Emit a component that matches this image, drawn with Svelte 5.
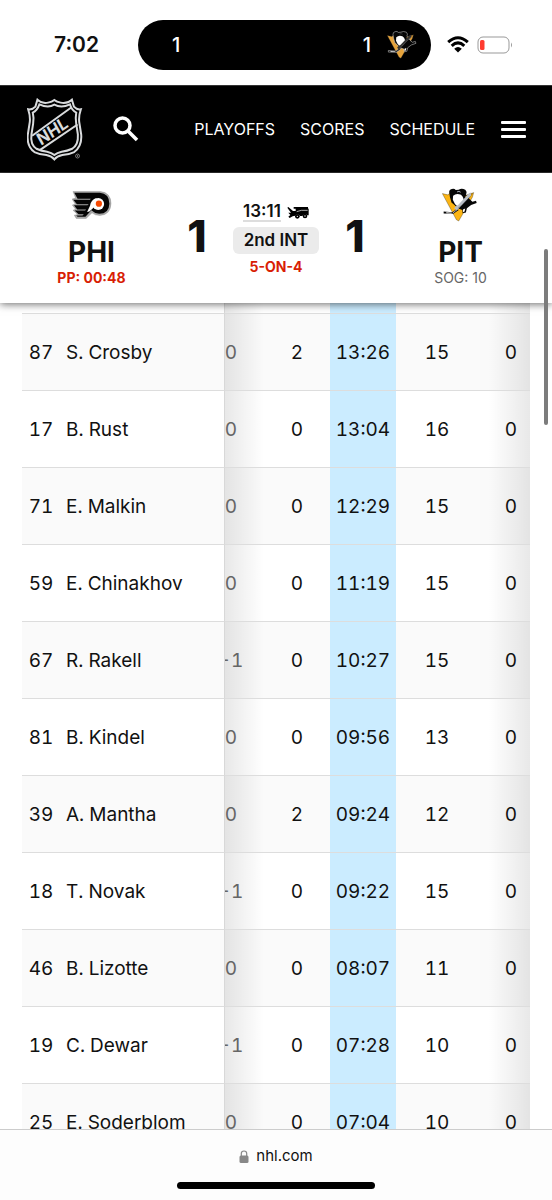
<script lang="ts">
    type Skater = {
        number: number;
        name: string;
        plusMinus: string;
        pim: number;
        toi: string;
        shifts: number;
        giveaways: number;
    };

    const links = ["PLAYOFFS", "SCORES", "SCHEDULE"];

    const skaters: Skater[] = [
        { number: 87, name: "S. Crosby", plusMinus: "0", pim: 2, toi: "13:26", shifts: 15, giveaways: 0 },
        { number: 17, name: "B. Rust", plusMinus: "0", pim: 0, toi: "13:04", shifts: 16, giveaways: 0 },
        { number: 71, name: "E. Malkin", plusMinus: "0", pim: 0, toi: "12:29", shifts: 15, giveaways: 0 },
        { number: 59, name: "E. Chinakhov", plusMinus: "0", pim: 0, toi: "11:19", shifts: 15, giveaways: 0 },
        { number: 67, name: "R. Rakell", plusMinus: "-1", pim: 0, toi: "10:27", shifts: 15, giveaways: 0 },
        { number: 81, name: "B. Kindel", plusMinus: "0", pim: 0, toi: "09:56", shifts: 13, giveaways: 0 },
        { number: 39, name: "A. Mantha", plusMinus: "0", pim: 2, toi: "09:24", shifts: 12, giveaways: 0 },
        { number: 18, name: "T. Novak", plusMinus: "-1", pim: 0, toi: "09:22", shifts: 15, giveaways: 0 },
        { number: 46, name: "B. Lizotte", plusMinus: "0", pim: 0, toi: "08:07", shifts: 11, giveaways: 0 },
        { number: 19, name: "C. Dewar", plusMinus: "-1", pim: 0, toi: "07:28", shifts: 10, giveaways: 0 },
        { number: 25, name: "E. Soderblom", plusMinus: "0", pim: 0, toi: "07:04", shifts: 10, giveaways: 0 },
    ];
</script>

{#snippet penguins(size: string)}
    <svg class="penguins {size}" viewBox="50 24 110 104" aria-hidden="true">
        <path class="gold" d="M51 41 L68 45 L76 38 L92 36 L124 46 L147 38 L143 52 L101 125 L94 121 Z" />
        <path class="ink" d="M72 38 Q71 29 80 27 Q87 24 92 30 L101 29 Q110 24 121 29 Q128 36 123 43 L134 58 L143 66 L154 63 L156 70 L139 76 L126 86 L123 99 L113 101 L112 91 L98 86 L88 76 L79 68 L74 51 Z" />
        <path class="white" d="M84 48 Q94 38 108 45 Q118 54 116 67 Q108 80 99 82 Q87 73 83 60 Z" />
        <path class="gold" d="M120 49 L143 41 L134 54 L126 54 Z" />
        <path class="gray" d="M132 41 L138 38 L139 47 L98 87 L91 81 L100 75 Z" />
        <path class="ink" d="M55 96 L82 98 L96 87 L101 91 L85 103 L55 102 Z" />
        <path class="white" d="M63 98 L80 100 L79 102 L63 101 Z M114 90 L121 87 L119 96 L114 98 Z" />
        <path class="gray" d="M92 80 L101 87 L95 93 L87 86 Z" />
        <path class="stroke" d="M137 47 L98 88 L83 101 M96 36 Q102 32 107 37" />
    </svg>
{/snippet}

<div class="screen">
    <div class="status-bar">
        <span class="clock">7:02</span>
        <div class="island">
            <span>1</span>
            <span class="island-score">1</span>
            {@render penguins("small")}
        </div>
        <div class="status-icons">
            <svg class="wifi" viewBox="0 0 22 17" aria-hidden="true">
                <path d="M1.2 6.2 Q11 -2.8 20.8 6.2" />
                <path d="M4.7 9.8 Q11 4 17.3 9.8" />
                <path class="dot" d="M7.2 12.7 Q11 9.3 14.8 12.7 L11 16.5 Z" />
            </svg>
            <svg class="battery" viewBox="0 0 36 18" aria-hidden="true">
                <rect class="shell" x="1" y="1" width="31" height="16" rx="5" />
                <rect class="charge" x="3" y="4" width="4.5" height="10" rx="1.5" />
                <path d="M34 6.5 Q36 9 34 11.5 Z" />
            </svg>
        </div>
    </div>

    <header class="site-nav">
        <a class="home" href="/" aria-label="Home">
            <svg viewBox="82 36 168 190">
                <path class="shield" d="M113 41 Q126 54 145 50 Q157 48 164 42 Q171 48 183 50 Q203 54 217 41 L223 62 Q232 72 244 70 Q237 91 239 108 L245 146 Q248 181 224 199 Q207 207 188 208 Q172 211 164 221 Q156 211 140 208 Q121 207 104 199 Q80 181 84 146 L90 108 Q92 91 85 70 Q98 72 107 62 Z" />
                <path class="shield" d="M119 55 Q145 67 164 56 Q185 67 211 55 Q217 74 230 80 Q227 97 230 114 L235 146 Q237 177 218 189 Q203 196 186 198 Q172 201 164 208 Q156 201 142 198 Q125 196 110 189 Q91 177 95 146 L100 114 Q103 97 99 80 Q112 74 119 55 Z" />
                <path class="band" d="M97 150 L216 64 M120 193 L234 116" />
                <text transform="translate(124 181) rotate(-35) skewX(-6)">NHL</text>
                <circle class="mark" cx="234" cy="211" r="6" />
                <circle class="mark-dot" cx="234" cy="211" r="2" />
            </svg>
        </a>
        <button type="button" class="search" aria-label="Search">
            <svg viewBox="0 0 26 26">
                <circle cx="9.5" cy="9.5" r="7.5" />
                <path d="M15 15 L24 24" />
            </svg>
        </button>
        <nav>
            {#each links as link}
                <a href="/{link.toLowerCase()}">{link}</a>
            {/each}
        </nav>
        <button type="button" class="menu" aria-label="Menu">
            <span></span>
            <span></span>
            <span></span>
        </button>
    </header>

    <section class="scoreboard">
        <div class="team">
            <svg class="flyers" viewBox="215 61 122 90" aria-hidden="true">
                <path class="edge" d="M218 65 H302 Q333 68 334 101 Q333 136 300 138 Q285 138 276 130 L258 147 H228 L222 137 L232 135 L218 122 L226 119 L216 106 L225 103 L215 88 L226 85 Z" />
                <path class="ink" d="M222 69 H300 Q328 71 329 102 Q328 132 298 133 Q284 132 274 122 L256 142 H232 L228 138 H247 L251 134 H235 L223 123 H255 L258 120 H231 L221 107 H262 L266 104 H230 L219 90 H270 L272 87 H232 Z" />
                <circle class="white" cx="295" cy="103" r="18" />
                <path class="white" d="M290 85 Q273 90 270 108 L261 127 L268 126 L283 112 Z" />
                <circle class="orange" cx="297" cy="102" r="9.5" />
            </svg>
            <span class="abbrev">PHI</span>
            <span class="detail alert">PP: 00:48</span>
        </div>
        <span class="score">1</span>
        <div class="period">
            <div class="time-row">
                <span class="time">13:11</span>
                <svg class="zamboni" viewBox="0 0 66 39" aria-hidden="true">
                    <path d="M20 3 H63 V7 L65 9 V28 H61 Q54 19 46 30 H39 Q32 20 25 29 L17 31 L8 36 L4 32 L10 27 L4 20 H12 L1 5 L4 3 L18 15 H26 V8 H20 Z" />
                    <circle cx="31" cy="31" r="7" />
                    <circle cx="54" cy="30" r="7" />
                    <path class="cut" d="M29 17 L43 13 H62" />
                    <circle class="hub" cx="31" cy="31" r="2" />
                    <circle class="hub" cx="54" cy="30" r="2" />
                </svg>
            </div>
            <span class="pill">2nd INT</span>
            <span class="detail alert">5-ON-4</span>
        </div>
        <span class="score">1</span>
        <div class="team">
            {@render penguins("large")}
            <span class="abbrev">PIT</span>
            <span class="detail">SOG: 10</span>
        </div>
    </section>

    <main>
        <table>
            <colgroup>
                <col class="number-col" />
                <col />
                <col class="edge-col" />
                <col class="stat-col" />
                <col class="stat-col" />
                <col class="shift-col" />
                <col class="last-col" />
            </colgroup>
            <tbody>
                <tr class="scrolled">
                    <td></td>
                    <td></td>
                    <td class="plus-minus"></td>
                    <td></td>
                    <td class="sorted"></td>
                    <td></td>
                    <td class="last"></td>
                </tr>
                {#each skaters as skater}
                    <tr>
                        <td class="number">{skater.number}</td>
                        <td class="name">{skater.name}</td>
                        <td class="plus-minus">
                            <div><span>{skater.plusMinus}</span></div>
                        </td>
                        <td>{skater.pim}</td>
                        <td class="sorted">{skater.toi}</td>
                        <td>{skater.shifts}</td>
                        <td class="last">{skater.giveaways}</td>
                    </tr>
                {/each}
            </tbody>
        </table>
    </main>

    <footer>
        <a class="address" href="https://nhl.com">
            <svg viewBox="0 0 10 13" aria-hidden="true">
                <rect x="0.5" y="5.5" width="9" height="7.5" rx="1.5" />
                <path d="M2.3 6 V3.6 Q2.3 1 5 1 Q7.7 1 7.7 3.6 V6" />
            </svg>
            nhl.com
        </a>
        <div class="home-indicator"></div>
    </footer>
    <div class="scroll-thumb"></div>
</div>

<style>
    :global(body) {
        margin: 0;
        background: #fff;
    }

    .screen {
        position: relative;
        height: 100vh;
        overflow: hidden;
        display: flex;
        flex-direction: column;
        font-family: Inter, "Liberation Sans", sans-serif;
        color: #111;
    }

    a {
        color: inherit;
        text-decoration: none;
    }

    button {
        padding: 0;
        border: none;
        background: none;
        cursor: pointer;
    }

    svg {
        display: block;
    }

    .status-bar {
        flex: none;
        height: 85px;
        padding-top: 4px;
        box-sizing: border-box;
        display: grid;
        grid-template-columns: 138px 1fr 121px;
        align-items: center;
    }

    .clock {
        padding-left: 54px;
        font-size: 21px;
        font-weight: 600;
    }

    .island {
        height: 50px;
        padding: 0 14px 0 34px;
        border-radius: 25px;
        background: #000;
        color: #fff;
        display: flex;
        align-items: center;
        font-size: 20px;
        font-weight: 500;
    }

    .island-score {
        margin-left: auto;
        margin-right: 16px;
    }

    .status-icons {
        padding-left: 16px;
        display: flex;
        align-items: center;
        gap: 8px;
    }

    .wifi {
        width: 22px;
        height: 17px;
        fill: none;
        stroke: #000;
        stroke-width: 3;
    }

    .wifi .dot {
        fill: #000;
        stroke: none;
    }

    .battery {
        width: 36px;
        height: 18px;
        fill: #999;
    }

    .battery .shell {
        fill: none;
        stroke: #999;
    }

    .battery .charge {
        fill: #ff3b30;
    }

    .penguins.small {
        width: 30px;
        height: 30px;
        overflow: visible;
    }

    .penguins.large {
        width: 36px;
        height: 34px;
    }

    .gold {
        fill: #fcb514;
        stroke: #222;
        stroke-width: 1;
    }

    .ink {
        fill: #060606;
    }

    .white {
        fill: #fff;
    }

    .gray {
        fill: #b8bec6;
    }

    .penguins .stroke {
        fill: none;
        stroke: #aeb5be;
        stroke-width: 3;
    }

    .small .gold {
        fill: #e5a33c;
    }

    .small .ink {
        stroke: #ccc;
        stroke-width: 2;
    }

    .small .gray {
        fill: #333;
    }

    .penguins.small .stroke {
        stroke: #555;
        stroke-width: 2;
    }

    .site-nav {
        flex: none;
        height: 88px;
        padding: 0 26px 0 27px;
        box-sizing: border-box;
        border-top: 1px solid #333;
        border-bottom: 1px solid #333;
        background: #000;
        color: #fff;
        display: flex;
        align-items: center;
    }

    .home svg {
        width: 56px;
        height: 63px;
    }

    .shield,
    .band {
        fill: none;
        stroke: #d9dbdd;
        stroke-width: 6;
    }

    .home text {
        fill: #d9dbdd;
        font-size: 50px;
        font-weight: 700;
    }

    .mark {
        fill: none;
        stroke: #aaa;
        stroke-width: 2;
    }

    .mark-dot {
        fill: #aaa;
    }

    .search {
        margin-left: 30px;
    }

    .search svg {
        width: 26px;
        height: 26px;
        fill: none;
        stroke: #fff;
        stroke-width: 3.5;
    }

    nav {
        margin-left: auto;
        display: flex;
        gap: 25px;
        font-size: 16px;
    }

    .menu {
        width: 25px;
        margin-left: 26px;
        display: grid;
        gap: 4px;
    }

    .menu span {
        height: 3px;
        border-radius: 1px;
        background: #fff;
    }

    .scoreboard {
        position: relative;
        z-index: 1;
        flex: none;
        height: 130px;
        background: #fff;
        box-shadow: 0 1px 8px rgba(0, 0, 0, 0.6);
        display: grid;
        grid-template-columns: 1fr 28px 130px 28px 1fr;
        justify-items: center;
    }

    .team {
        padding-top: 15px;
        display: flex;
        flex-direction: column;
        align-items: center;
    }

    .flyers {
        width: 40px;
        height: 34px;
    }

    .edge {
        fill: #aaa;
        stroke: #777;
    }

    .orange {
        fill: #f74902;
    }

    .abbrev {
        margin-top: 13px;
        font-size: 28px;
        line-height: 34px;
        font-weight: 700;
    }

    .detail {
        font-size: 14px;
        line-height: 18px;
        color: #666;
    }

    .alert {
        color: #d81e05;
        font-weight: 700;
    }

    .score {
        padding-top: 37px;
        font-size: 44px;
        line-height: 52px;
        font-weight: 800;
    }

    .period {
        padding-top: 29px;
        display: flex;
        flex-direction: column;
        align-items: center;
    }

    .time-row {
        display: flex;
        align-items: center;
        gap: 6px;
    }

    .time {
        border-bottom: 2px solid #ddd;
        font-size: 17px;
        line-height: 18px;
        font-weight: 600;
    }

    .zamboni {
        width: 22px;
        height: 13px;
    }

    .cut {
        fill: none;
        stroke: #fff;
        stroke-width: 2;
    }

    .hub {
        fill: #fff;
    }

    .pill {
        margin: 5px 0 4px;
        padding: 0 11px;
        border-radius: 6px;
        background: #ebebeb;
        font-size: 17px;
        line-height: 27px;
        font-weight: 600;
    }

    main {
        flex: 1;
        min-height: 0;
        overflow: hidden;
        padding: 0 22px;
    }

    table {
        width: 100%;
        table-layout: fixed;
        border-spacing: 0;
        font-size: 19px;
        font-variant-numeric: tabular-nums;
    }

    .number-col {
        width: 38px;
    }

    .edge-col {
        width: 40px;
    }

    .stat-col {
        width: 66px;
    }

    .shift-col {
        width: 82px;
    }

    .last-col {
        width: 52px;
    }

    td {
        height: 77px;
        box-sizing: border-box;
        padding: 0;
        border-bottom: 1px solid #ddd;
        text-align: center;
    }

    tr:nth-child(even) {
        background: #fafafa;
    }

    .scrolled td {
        height: 11px;
    }

    .name {
        padding-left: 6px;
        text-align: left;
    }

    .plus-minus {
        border-left: 1px solid #d8d8d8;
        background: linear-gradient(to right, rgba(0, 0, 0, 0.09), rgba(0, 0, 0, 0));
        color: #666;
    }

    /* the rest of this column lies under the pinned player names */
    .plus-minus div {
        display: flex;
        justify-content: flex-end;
        overflow: hidden;
    }

    .plus-minus span {
        flex: 0 0 66px;
    }

    .sorted {
        background: #cbecff;
    }

    .last {
        padding-left: 14px;
        background: linear-gradient(to right, rgba(0, 0, 0, 0) 20%, rgba(0, 0, 0, 0.09));
    }

    footer {
        flex: none;
        height: 71px;
        box-sizing: border-box;
        padding: 16px 0 11px;
        border-top: 1px solid #ccc;
        background: #fdfdfd;
        display: flex;
        flex-direction: column;
        align-items: center;
        justify-content: space-between;
    }

    .address {
        display: flex;
        align-items: center;
        gap: 7px;
        font-size: 15px;
        line-height: 20px;
    }

    .address svg {
        width: 10px;
        height: 13px;
        fill: #888;
    }

    .address path {
        fill: none;
        stroke: #888;
        stroke-width: 1.2;
    }

    .home-indicator {
        width: 198px;
        height: 7px;
        border-radius: 4px;
        background: #000;
    }

    .scroll-thumb {
        position: absolute;
        z-index: 2;
        top: 249px;
        right: 4px;
        width: 4px;
        height: 176px;
        border-radius: 2px;
        background: #7c7c7c;
    }
</style>
